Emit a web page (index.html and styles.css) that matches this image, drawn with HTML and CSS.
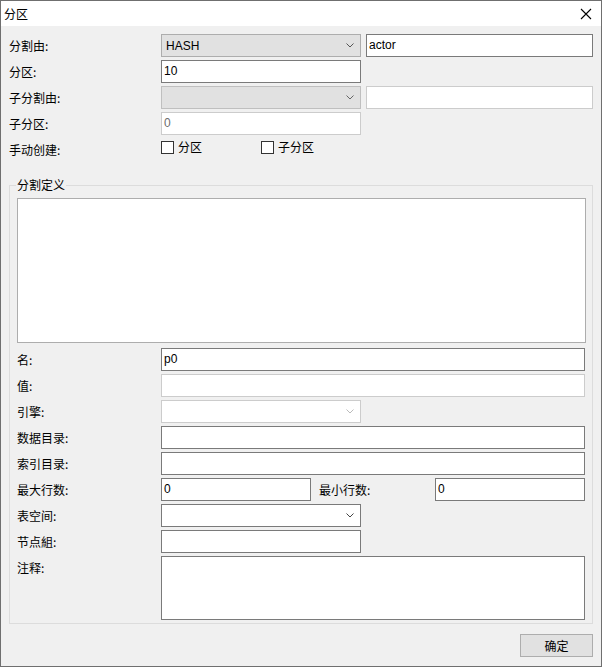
FILE: index.html
```html
<!DOCTYPE html>
<html lang="zh">
<head>
    <meta charset="UTF-8">
    <title>分区</title>
    <link rel="stylesheet" href="styles.css">
</head>
<body>
    <div class="dialog">
        <!-- Title bar -->
        <div class="titlebar">
            <span class="title">分区</span>
            <svg class="close" width="12" height="12" viewBox="0 0 12 12">
                <path d="M1 1 L11 11 M11 1 L1 11" stroke="#000" stroke-width="1.1" fill="none"/>
            </svg>
        </div>

        <div class="content">
            <!-- Partition settings -->
            <div class="form-top">
                <span class="label">分割由:</span>
                <div class="select">
                    <span>HASH</span>
                    <svg class="chevron" width="8" height="5" viewBox="0 0 8 5"><path d="M0.5 0.5 L4 4 L7.5 0.5" stroke="#555" fill="none"/></svg>
                </div>
                <div class="field">actor</div>

                <span class="label">分区:</span>
                <div class="field">10</div>
                <span></span>

                <span class="label">子分割由:</span>
                <div class="select disabled">
                    <span></span>
                    <svg class="chevron" width="8" height="5" viewBox="0 0 8 5"><path d="M0.5 0.5 L4 4 L7.5 0.5" stroke="#666" fill="none"/></svg>
                </div>
                <div class="field disabled"></div>

                <span class="label">子分区:</span>
                <div class="field disabled">0</div>
                <span></span>

                <span class="label">手动创建:</span>
                <div class="checks">
                    <span class="check"><span class="box"></span>分区</span>
                    <span class="check"><span class="box"></span>子分区</span>
                </div>
                <span></span>
            </div>

            <!-- Partition definition group -->
            <fieldset class="group">
                <legend>分割定义</legend>
                <div class="listbox"></div>
                <div class="form-group">
                    <div class="row">
                        <span class="label">名:</span>
                        <div class="field wide">p0</div>
                    </div>
                    <div class="row">
                        <span class="label">值:</span>
                        <div class="field wide disabled"></div>
                    </div>
                    <div class="row">
                        <span class="label">引擎:</span>
                        <div class="select plain disabled">
                            <span></span>
                            <svg class="chevron" width="8" height="5" viewBox="0 0 8 5"><path d="M0.5 0.5 L4 4 L7.5 0.5" stroke="#bbb" fill="none"/></svg>
                        </div>
                    </div>
                    <div class="row">
                        <span class="label">数据目录:</span>
                        <div class="field wide"></div>
                    </div>
                    <div class="row">
                        <span class="label">索引目录:</span>
                        <div class="field wide"></div>
                    </div>
                    <div class="row">
                        <span class="label">最大行数:</span>
                        <div class="field half">0</div>
                        <span class="label inline">最小行数:</span>
                        <div class="field half">0</div>
                    </div>
                    <div class="row">
                        <span class="label">表空间:</span>
                        <div class="select plain">
                            <span></span>
                            <svg class="chevron" width="8" height="5" viewBox="0 0 8 5"><path d="M0.5 0.5 L4 4 L7.5 0.5" stroke="#444" fill="none"/></svg>
                        </div>
                    </div>
                    <div class="row">
                        <span class="label">节点組:</span>
                        <div class="field short"></div>
                    </div>
                    <div class="row tall">
                        <span class="label">注释:</span>
                        <div class="field wide area"></div>
                    </div>
                </div>
            </fieldset>

            <div class="actions">
                <button class="btn">确定</button>
            </div>
        </div>
    </div>
</body>
</html>
```

FILE: styles.css
```css
/* General */
body {
    margin: 0;
    font-family: "Noto Sans CJK SC", "Liberation Sans", sans-serif;
    font-size: 12px;
    color: #000;
    background-color: #fff;
}

.dialog {
    width: 602px;
    height: 667px;
    box-sizing: border-box;
    border: 1px solid #6f6f6f;
    background-color: #f0f0f0; /* Window face */
    display: flex;
    flex-direction: column;
}

/* Title bar */
.titlebar {
    height: 25px;
    background-color: #fff;
    display: flex;
    align-items: center;
    justify-content: space-between;
    padding: 0 9px 0 3px;
}

.title {
    line-height: 16px;
}

/* Content */
.content {
    flex: 1;
    padding: 8px 8px 0 8px;
}

.label {
    line-height: 23px;
    white-space: nowrap;
}

.form-top {
    display: grid;
    grid-template-columns: 147px 200px 227px;
    grid-auto-rows: 23px;
    column-gap: 5px;
    row-gap: 3px;
}

/* Inputs */
.field {
    box-sizing: border-box;
    height: 23px;
    border: 1px solid #7a7a7a;
    background-color: #fff;
    padding: 0 2px;
    line-height: 21px;
    font-family: "Liberation Sans", "Noto Sans CJK SC", sans-serif;
}

.field.disabled {
    border-color: #cccccc;
    color: #6d6d6d;
}

.field.wide {
    width: 424px;
}

.field.half {
    width: 150px;
}

.field.short {
    width: 200px;
}

.field.area {
    height: 64px;
}

.select {
    box-sizing: border-box;
    width: 200px;
    height: 23px;
    border: 1px solid #adadad;
    background-color: #e1e1e1;
    display: flex;
    align-items: center;
    justify-content: space-between;
    padding: 0 6px 0 4px;
    font-family: "Liberation Sans", "Noto Sans CJK SC", sans-serif;
}

.select.disabled {
    border-color: #bfbfbf;
}

.select.plain {
    background-color: #fff;
    border-color: #7a7a7a;
}

.select.plain.disabled {
    border-color: #cccccc;
}

/* Checkboxes */
.checks {
    display: flex;
    align-items: flex-start;
    padding-top: 1px;
}

.check {
    display: flex;
    align-items: center;
    width: 100px;
    line-height: 16px;
}

.box {
    width: 13px;
    height: 13px;
    box-sizing: border-box;
    border: 1px solid #333;
    background-color: #fff;
    margin: 0 4px 0 0;
}

/* Group box */
.group {
    margin: 16px 0 0 0;
    padding: 5px 6px 3px 7px;
    border: 1px solid #dcdcdc;
    min-width: 0;
}

.group legend {
    padding: 0 1px;
    margin-left: -1px;
    line-height: 16px;
}

.listbox {
    box-sizing: border-box;
    height: 145px;
    border: 1px solid #adadad;
    background-color: #fff;
    margin-bottom: 5px;
}

.form-group {
    display: flex;
    flex-direction: column;
    gap: 3px;
}

.row {
    display: flex;
    align-items: flex-start;
}

.row .label {
    width: 144px;
}

.row .label.inline {
    width: 116px;
    margin-left: 8px;
}

/* Buttons */
.actions {
    display: flex;
    justify-content: flex-end;
    margin-top: 10px;
}

.btn {
    width: 73px;
    height: 23px;
    border: 1px solid #adadad;
    background-color: #e1e1e1;
    font-family: "Noto Sans CJK SC", sans-serif;
    font-size: 12px;
    padding: 0;
    color: #000;
}
```
